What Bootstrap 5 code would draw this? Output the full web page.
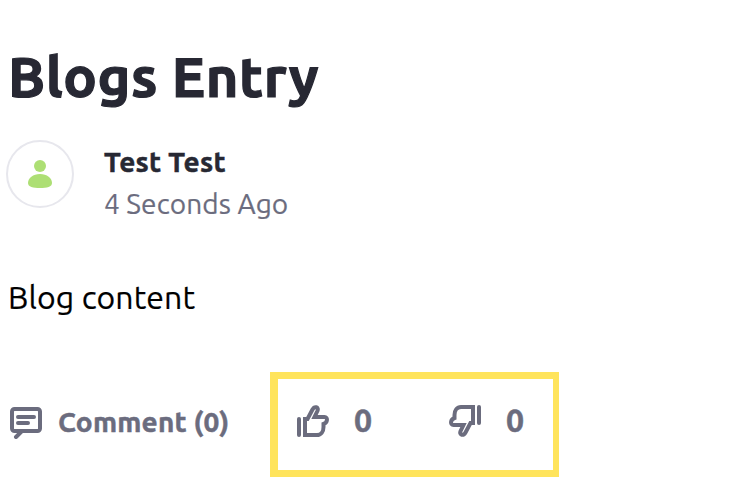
<!DOCTYPE html>
<html lang="en">
<head>
<meta charset="utf-8">
<meta name="viewport" content="width=device-width, initial-scale=1">
<title>Blogs Entry</title>
<link href="https://cdn.jsdelivr.net/npm/bootstrap@5.3.0/dist/css/bootstrap.min.css" rel="stylesheet">
<style>
body{font-family:Ubuntu,"Noto Sans",sans-serif;color:#000;background:#fff;overflow:hidden}
.fw-bold{-webkit-text-stroke:.5px currentColor}
.entry{padding:43px 0 0 8px}
.entry-title{font-size:56px;line-height:68px;color:#272833;white-space:nowrap;letter-spacing:.55px}
.entry-title.fw-bold{-webkit-text-stroke-width:1.2px}
.byline{margin-top:29px;gap:30px;margin-left:-2px}
.avatar{width:68px;height:68px;border:2px solid #e7e7ed;flex:none}
.author{font-size:28px;line-height:42px;margin-top:1px;white-space:nowrap}
.author-name{color:#272833;letter-spacing:.28px}
.author-date{color:#6b6c7e;letter-spacing:.08px;-webkit-text-stroke:.2px currentColor}
.entry-text{font-size:32px;line-height:48px;margin-top:48px;letter-spacing:.1px;-webkit-text-stroke:.2px currentColor}
.entry-actions{margin-top:51px;color:#6b6c7e}
.comment-link{width:262px;gap:16px;font-size:28px;line-height:40px;white-space:nowrap;padding:0 0 3px 2px;letter-spacing:.2px}
.comment-link span{margin-top:-2px}
.ratings{width:289px;height:105px;border:solid #ffe45c;border-width:7px 6px 7px 8px;padding:0 0 7px 19px;font-size:32px;line-height:40px}
.ratings span{margin-top:-2px}
.vote{flex:0 0 152px;gap:25px}
.entry-actions svg{flex:none}
</style>
<script src="https://cdn.jsdelivr.net/npm/bootstrap@5.3.0/dist/js/bootstrap.bundle.min.js"></script>
</head>
<body>
<main class="entry">
  <h1 class="entry-title fw-bold m-0">Blogs Entry</h1>
  <div class="byline d-flex">
    <span class="avatar rounded-circle d-flex align-items-center justify-content-center">
      <svg width="24" height="28" viewBox="0 0 24 28" fill="#addf74"><circle cx="12" cy="6" r="6"/><path d="M12 14C5 14 0 18 0 23c0 4 5 5 12 5s12-1 12-5c0-5-5-9-12-9z"/></svg>
    </span>
    <div class="author">
      <div class="author-name fw-bold"><span>Test Test</span></div>
      <div class="author-date"><span>4 Seconds Ago</span></div>
    </div>
  </div>
  <p class="entry-text mb-0"><span>Blog content</span></p>
  <div class="entry-actions d-flex align-items-center fw-bold">
    <div class="comment-link d-flex align-items-center">
      <svg width="32" height="32" viewBox="0 0 32 32" fill="none" stroke="currentColor" stroke-width="4" stroke-linecap="round"><rect x="2" y="2" width="28" height="22" rx="2.500"/><path d="M12 24l-6 6M8 10h16M8 16h10"/></svg>
      <span>Comment (0)</span>
    </div>
    <div class="ratings d-flex align-items-center">
      <div class="vote d-flex align-items-center">
        <svg width="32" height="32" viewBox="0 0 32 32" fill="none" stroke="currentColor" stroke-width="4" stroke-linecap="round"><path d="M2 14v16"/><path d="M8 30V14h2.500L15.500 4.500C17.500 .8 22 1.800 20.500 5.800L17.500 12H27.500c3.500 0 3.300 5.500-1 7v3C26.500 26.500 24 30 20 30z"/></svg>
        <span>0</span>
      </div>
      <div class="vote d-flex align-items-center">
        <svg width="32" height="32" viewBox="0 0 32 32" fill="none" stroke="currentColor" stroke-width="4" stroke-linecap="round"><g transform="rotate(180 16 16)"><path d="M2 14v16"/><path d="M8 30V14h2.500L15.500 4.500C17.500 .8 22 1.800 20.500 5.800L17.500 12H27.500c3.500 0 3.300 5.500-1 7v3C26.500 26.500 24 30 20 30z"/></g></svg>
        <span>0</span>
      </div>
    </div>
  </div>
</main>
</body>
</html>
